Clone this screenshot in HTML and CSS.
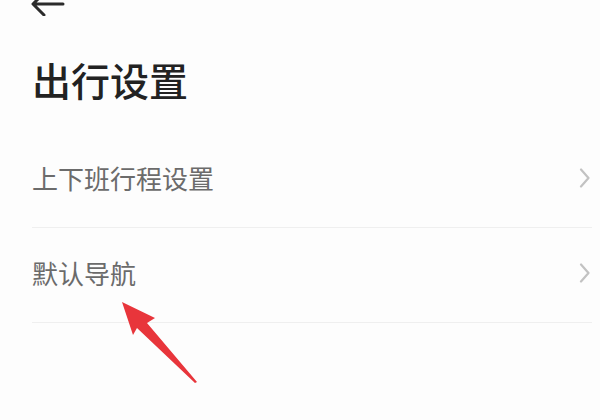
FILE: index.html
```html
<!DOCTYPE html>
<html lang="zh-CN">
<head>
<meta charset="utf-8">
<link rel="stylesheet" href="styles.css">
</head>
<body>
<div class="page">
  <div class="topbar">
    <svg class="back" width="34" height="16" viewBox="0 0 34 16">
      <path d="M32 4 H3 M13 -7 L2 4 L13 15" fill="none" stroke="#2b2b2b" stroke-width="3" stroke-linecap="round" stroke-linejoin="round"/>
    </svg>
  </div>
  <h1 class="title">出行设置</h1>
  <ul class="list">
    <li class="row">
      <span class="label">上下班行程设置</span>
      <svg class="chev" width="12" height="20" viewBox="0 0 12 20"><path d="M2 1.5 L9.5 10 L2 18.5" fill="none" stroke="#c2c2c2" stroke-width="2.2" stroke-linecap="round" stroke-linejoin="round"/></svg>
    </li>
    <li class="row">
      <span class="label">默认导航</span>
      <svg class="chev" width="12" height="20" viewBox="0 0 12 20"><path d="M2 1.5 L9.5 10 L2 18.5" fill="none" stroke="#c2c2c2" stroke-width="2.2" stroke-linecap="round" stroke-linejoin="round"/></svg>
    </li>
  </ul>
  <svg class="pointer" width="90" height="90" viewBox="0 0 90 90">
    <path d="M2 2 L35 18 L27 23 L77 82 L75 83 L17 28 L13 35 Z" fill="#e8353b"/>
  </svg>
</div>
</body>
</html>
```
FILE: styles.css
```css
html, body {
  margin: 0;
  padding: 0;
  background: #fdfdfd;
}
.page {
  position: relative;
  width: 600px;
  height: 420px;
  overflow: hidden;
  padding: 0 8px 0 32px;
  box-sizing: border-box;
  font-family: "Noto Sans CJK SC", "Noto Sans", sans-serif;
}
.topbar {
  height: 16px;
  margin-left: -1px;
}
.back {
  display: block;
}
.title {
  margin: 44px 0 0 0;
  font-size: 39px;
  line-height: 39px;
  font-weight: 500;
  color: #222;
  letter-spacing: 0;
}
.list {
  list-style: none;
  margin: 34px 0 0 0;
  padding: 0;
}
.row {
  display: flex;
  align-items: center;
  justify-content: space-between;
  height: 94px;
  border-bottom: 1px solid #efefef;
}
.label {
  font-size: 26px;
  color: #6b6b6b;
  line-height: 30px;
  margin-top: -4px;
}
.chev {
  display: block;
  margin-right: 1px;
  margin-top: -4px;
}
.pointer {
  position: absolute;
  left: 120px;
  top: 300px;
}
```
